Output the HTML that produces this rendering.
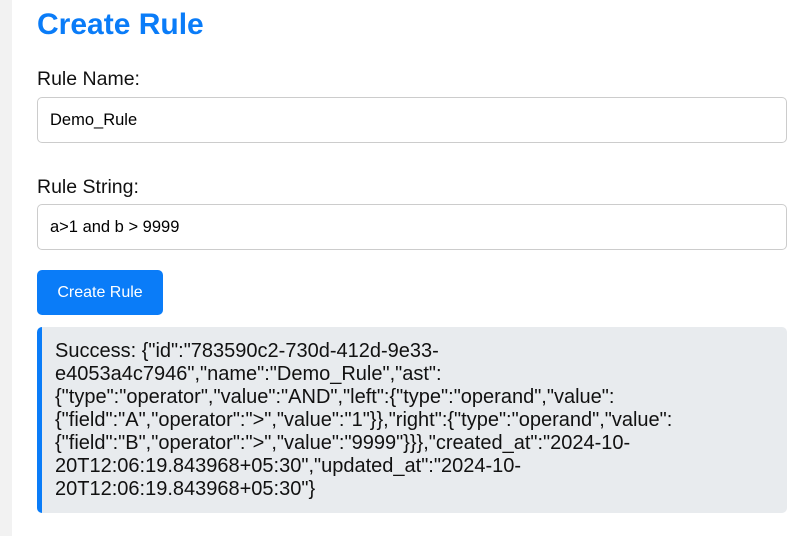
<!DOCTYPE html>
<html><head><style>
body{margin:0;width:791px;height:536px;background:#f2f2f2;font-family:"Liberation Sans",Arial,sans-serif;overflow:hidden}
.c{position:absolute;left:12px;top:0;width:779px;height:536px;background:#fff}
h1{position:absolute;left:37px;top:5px;margin:0;font-size:30px;font-weight:bold;color:#0a7cf8;line-height:40px}
.l{position:absolute;left:37px;font-size:19.5px;color:#111;line-height:22px}
.i{position:absolute;left:37px;width:750px;height:46px;border:1px solid #ccc;border-radius:5px;box-sizing:border-box;background:#fff;font-size:16.5px;line-height:44px;padding-left:12px;color:#000}
.b{position:absolute;left:37px;top:270px;width:126px;height:45px;background:#0a7cf8;border-radius:5px;color:#fff;font-size:16px;line-height:45px;text-align:center}
.m{position:absolute;left:37px;top:327px;width:750px;height:186px;box-sizing:border-box;background:#e8ebee;border-left:5px solid #0a7cf8;border-radius:5px;padding:13px 10px 0 13px;font-size:20px;line-height:23px;color:#111;white-space:nowrap}
</style></head><body>
<div class="c"></div>
<h1>Create Rule</h1>
<div class="l" style="top:68px">Rule Name:</div>
<div class="i" style="top:97px">Demo_Rule</div>
<div class="l" style="top:176px">Rule String:</div>
<div class="i" style="top:204px">a&gt;1 and b &gt; 9999</div>
<div class="b">Create Rule</div>
<div class="m">Success: {"id":"783590c2-730d-412d-9e33-<br>e4053a4c7946","name":"Demo_Rule","ast":<br>{"type":"operator","value":"AND","left":{"type":"operand","value":<br>{"field":"A","operator":"&gt;","value":"1"}},"right":{"type":"operand","value":<br>{"field":"B","operator":"&gt;","value":"9999"}}},"created_at":"2024-10-<br>20T12:06:19.843968+05:30","updated_at":"2024-10-<br>20T12:06:19.843968+05:30"}</div>
</body></html>
